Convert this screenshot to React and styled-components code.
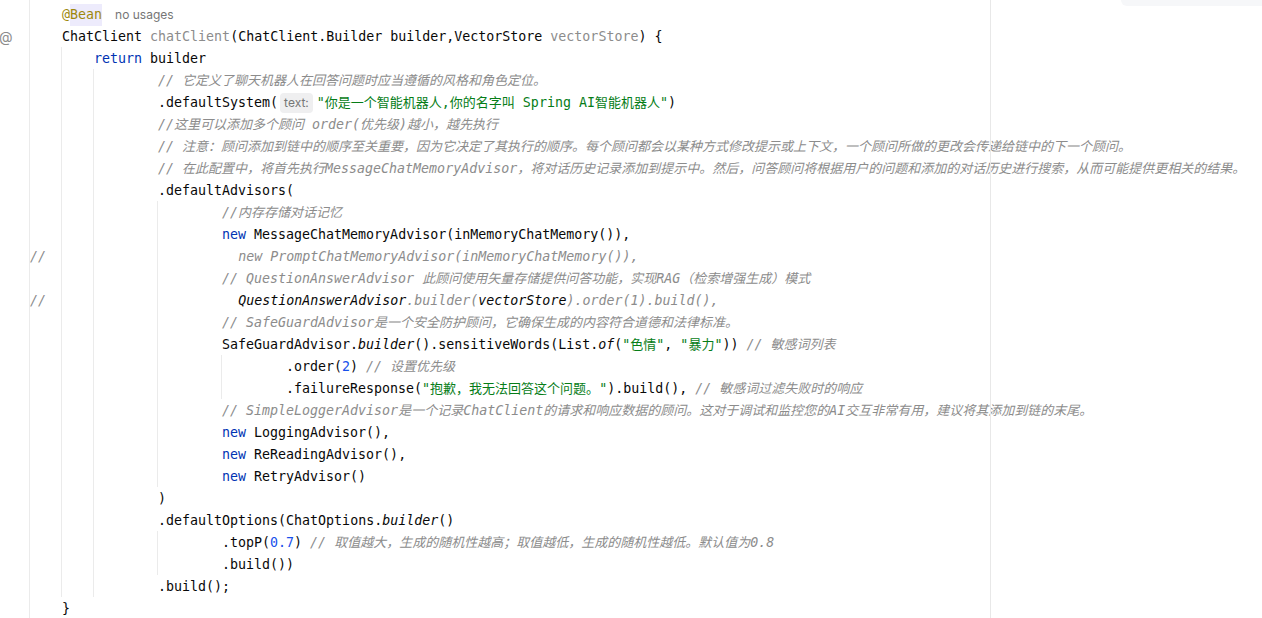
import React from "react";
import styled, { createGlobalStyle, css } from "styled-components";

const GlobalStyle = createGlobalStyle`
  html, body {
    margin: 0;
    padding: 0;
    background: #ffffff;
    overflow: hidden;
  }
`;

const LINE = 22;
const TOP = 3;
const COL = 8;
const TEXT_LEFT = 30;

const Editor = styled.div`
  position: relative;
  width: 1262px;
  height: 618px;
  background: #ffffff;
  overflow: hidden;
`;

const Lines = styled.div`
  display: flex;
  flex-direction: column;
  padding-top: ${TOP + 1}px;
`;

const Row = styled.div`
  display: flex;
  align-items: center;
  height: ${LINE}px;
`;

const Gutter = styled.div`
  width: ${TEXT_LEFT}px;
  flex: none;
  font-family: "Inter", "Noto Sans", sans-serif;
  font-size: 14px;
  color: #8c8c8c;
  margin-left: -1px;
  line-height: ${LINE}px;
`;

const Code = styled.div`
  display: flex;
  align-items: center;
  padding-left: ${(p) => p.$indent * COL + 1}px;
  font-family: "DejaVu Sans Mono", "Noto Sans CJK SC", monospace;
  font-size: 13.3px;
  line-height: ${LINE}px;
  white-space: pre;
  color: #080808;
`;

const kinds = {
  p: css`color: #080808;`,
  k: css`color: #0033b3;`,
  s: css`color: #067d17;`,
  n: css`color: #1750eb;`,
  c: css`color: #8c8c8c; font-style: italic;`,
  cd: css`color: #080808; font-style: italic;`,
  a: css`color: #9e880d;`,
  u: css`color: #8c8c8c;`,
  i: css`color: #080808; font-style: italic;`,
};

const Tok = styled.span`
  ${(p) => kinds[p.$kind]}
  ${(p) =>
    p.$mark &&
    css`
      background: #edebfc;
      display: inline-block;
      height: ${LINE}px;
    `}
`;

const Han = styled.span`
  font-size: 13px;
`;

const Hint = styled.span`
  font-family: "Inter", "Noto Sans", sans-serif;
  font-size: 12px;
  color: #767676;
  font-style: normal;
  ${(p) =>
    p.$boxed
      ? css`
          background: #efeff0;
          border-radius: 4px;
          padding: 0 4px;
          height: 20px;
          line-height: 20px;
          margin: 0 4px 0 2px;
          display: inline-block;
        `
      : css`
          margin-left: 13px;
        `}
`;

const Guide = styled.div`
  position: absolute;
  width: 1px;
  background: #ebebeb;
`;

const Margin = styled.div`
  position: absolute;
  top: 0;
  bottom: 0;
  left: 990px;
  width: 1px;
  background: #e8e8e8;
`;

const Toolbar = styled.div`
  position: absolute;
  top: 0;
  right: 0;
  width: 141px;
  height: 6px;
  background: #f6f7f9;
  border-bottom-left-radius: 6px;
`;

const cjk = /([\u3000-\u303f\u4e00-\u9fff\uff00-\uffef]+)/;

const withHan = (text) =>
  text.split(cjk).map((part, i) =>
    cjk.test(part) ? <Han key={i}>{part}</Han> : part
  );

const code = [
  { i: 4, t: [["a", "@"], ["a", "Bean", true], ["hint", "no usages"]] },
  {
    i: 4,
    g: "@",
    t: [
      ["p", "ChatClient "],
      ["u", "chatClient"],
      ["p", "(ChatClient.Builder builder,VectorStore "],
      ["u", "vectorStore"],
      ["p", ") {"],
    ],
  },
  { i: 8, t: [["k", "return "], ["p", "builder"]] },
  { i: 16, t: [["c", "// 它定义了聊天机器人在回答问题时应当遵循的风格和角色定位。"]] },
  {
    i: 16,
    t: [
      ["p", ".defaultSystem("],
      ["box", "text:"],
      ["s", "\"你是一个智能机器人,你的名字叫 Spring AI智能机器人\""],
      ["p", ")"],
    ],
  },
  { i: 16, t: [["c", "//这里可以添加多个顾问 order(优先级)越小，越先执行"]] },
  {
    i: 16,
    t: [
      [
        "c",
        "// 注意：顾问添加到链中的顺序至关重要，因为它决定了其执行的顺序。每个顾问都会以某种方式修改提示或上下文，一个顾问所做的更改会传递给链中的下一个顾问。",
      ],
    ],
  },
  {
    i: 16,
    t: [
      [
        "c",
        "// 在此配置中，将首先执行MessageChatMemoryAdvisor，将对话历史记录添加到提示中。然后，问答顾问将根据用户的问题和添加的对话历史进行搜索，从而可能提供更相关的结果。",
      ],
    ],
  },
  { i: 16, t: [["p", ".defaultAdvisors("]] },
  { i: 24, t: [["c", "//内存存储对话记忆"]] },
  {
    i: 24,
    t: [["k", "new "], ["p", "MessageChatMemoryAdvisor(inMemoryChatMemory()),"]],
  },
  {
    i: 0,
    t: [["c", "//                        new PromptChatMemoryAdvisor(inMemoryChatMemory()),"]],
  },
  {
    i: 24,
    t: [["c", "// QuestionAnswerAdvisor 此顾问使用矢量存储提供问答功能，实现RAG（检索增强生成）模式"]],
  },
  {
    i: 0,
    t: [
      ["c", "//                        "],
      ["cd", "QuestionAnswerAdvisor"],
      ["c", ".builder("],
      ["cd", "vectorStore"],
      ["c", ").order(1).build(),"],
    ],
  },
  {
    i: 24,
    t: [["c", "// SafeGuardAdvisor是一个安全防护顾问，它确保生成的内容符合道德和法律标准。"]],
  },
  {
    i: 24,
    t: [
      ["p", "SafeGuardAdvisor."],
      ["i", "builder"],
      ["p", "().sensitiveWords(List."],
      ["i", "of"],
      ["p", "("],
      ["s", "\"色情\""],
      ["p", ", "],
      ["s", "\"暴力\""],
      ["p", ")) "],
      ["c", "// 敏感词列表"],
    ],
  },
  {
    i: 32,
    t: [["p", ".order("], ["n", "2"], ["p", ") "], ["c", "// 设置优先级"]],
  },
  {
    i: 32,
    t: [
      ["p", ".failureResponse("],
      ["s", "\"抱歉，我无法回答这个问题。\""],
      ["p", ").build(), "],
      ["c", "// 敏感词过滤失败时的响应"],
    ],
  },
  {
    i: 24,
    t: [
      [
        "c",
        "// SimpleLoggerAdvisor是一个记录ChatClient的请求和响应数据的顾问。这对于调试和监控您的AI交互非常有用，建议将其添加到链的末尾。",
      ],
    ],
  },
  { i: 24, t: [["k", "new "], ["p", "LoggingAdvisor(),"]] },
  { i: 24, t: [["k", "new "], ["p", "ReReadingAdvisor(),"]] },
  { i: 24, t: [["k", "new "], ["p", "RetryAdvisor()"]] },
  { i: 16, t: [["p", ")"]] },
  {
    i: 16,
    t: [["p", ".defaultOptions(ChatOptions."], ["i", "builder"], ["p", "()"]],
  },
  {
    i: 24,
    t: [
      ["p", ".topP("],
      ["n", "0.7"],
      ["p", ") "],
      ["c", "// 取值越大，生成的随机性越高；取值越低，生成的随机性越低。默认值为0.8"],
    ],
  },
  { i: 24, t: [["p", ".build())"]] },
  { i: 16, t: [["p", ".build();"]] },
  { i: 4, t: [["p", "}"]] },
];

// indent guides: column, first line, last line (1-based)
const guides = [
  [0, 0, 0],
  [4, 3, 27],
  [8, 4, 27],
  [16, 10, 22],
  [16, 25, 26],
  [24, 17, 18],
];

const renderTok = ([kind, text, mark], k) => {
  if (kind === "hint") return <Hint key={k}>{text}</Hint>;
  if (kind === "box") return <Hint key={k} $boxed>{text}</Hint>;
  return (
    <Tok key={k} $kind={kind} $mark={mark}>
      {withHan(text)}
    </Tok>
  );
};

export default function App() {
  return (
    <>
      <GlobalStyle />
      <Editor>
        {guides.map(([col, from, to], k) => {
          const left = TEXT_LEFT + col * COL - 1;
          const style =
            from === 0
              ? { left, top: 0, height: 618 }
              : {
                  left,
                  top: TOP + (from - 1) * LINE,
                  height: (to - from + 1) * LINE,
                };
          return <Guide key={k} style={style} />;
        })}
        <Margin />
        <Toolbar />
        <Lines>
          {code.map((line, n) => (
            <Row key={n}>
              <Gutter>{line.g || ""}</Gutter>
              <Code $indent={line.i}>{line.t.map(renderTok)}</Code>
            </Row>
          ))}
        </Lines>
      </Editor>
    </>
  );
}
